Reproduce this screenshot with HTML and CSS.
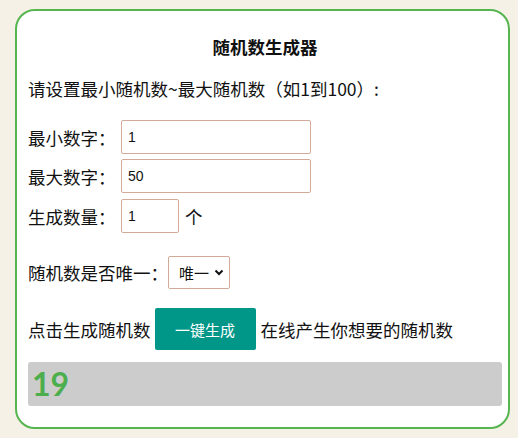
FILE: index.html
```html
<!DOCTYPE html>
<html lang="zh-CN">
<head>
<meta charset="utf-8">
<title>随机数生成器</title>
<link rel="stylesheet" href="styles.css">
</head>
<body>
<div class="card">
  <h3 class="title">随机数生成器</h3>
  <p class="intro">请设置最小随机数~最大随机数（如1到100）:</p>
  <div class="form">
    <div class="row"><label class="lbl">最小数字：</label><input class="inp" type="text" value="1"></div>
    <div class="row"><label class="lbl">最大数字：</label><input class="inp" type="text" value="50"></div>
    <div class="row"><label class="lbl">生成数量：</label><input class="inp short" type="text" value="1"><span class="unit">个</span></div>
  </div>
  <div class="row select-row"><label class="lbl">随机数是否唯一：</label>
    <div class="sel"><span>唯一</span><svg width="10" height="7" viewBox="0 0 10 7"><path d="M1.5 1.5 L5 5 L8.5 1.5" fill="none" stroke="#111" stroke-width="2"/></svg></div>
  </div>
  <div class="row btn-row"><span>点击生成随机数</span><button class="btn">一键生成</button><span>在线产生你想要的随机数</span></div>
  <div class="result">19</div>
</div>
</body>
</html>
```
FILE: styles.css
```css
html, body { margin: 0; padding: 0; }
body {
  background: #f6f1e6;
  font-family: "Noto Sans CJK SC", "Noto Sans", sans-serif;
  font-size: 17.5px;
  color: #111;
  width: 518px;
  height: 438px;
  overflow: hidden;
}
.card {
  box-sizing: border-box;
  margin: 9px 0 0 15px;
  width: 495px;
  height: 420px;
  background: #fff;
  border: 2px solid #55b54f;
  border-radius: 20px;
  padding: 24px 6px 0 11px;
}
.title {
  margin: 0;
  text-align: center;
  font-size: 17.5px;
  font-weight: bold;
  line-height: 24px;
}
.intro {
  margin: 18px 0 0;
  line-height: 24px;
}
.form {
  margin-top: 19px;
  display: flex;
  flex-direction: column;
  gap: 5px;
}
.row {
  display: flex;
  align-items: center;
}
.lbl { width: 93px; flex: none; white-space: nowrap; }
.inp {
  box-sizing: border-box;
  width: 190px;
  height: 34px;
  border: 1px solid #d2aa97;
  border-radius: 2px;
  padding: 0 6px;
  font-family: "Liberation Sans", Arial, sans-serif;
  font-size: 14px;
  color: #111;
  outline: none;
}
.inp.short { width: 58px; }
.unit { margin-left: 6px; }
.form .row:last-child { margin-top: 1px; }
.select-row { margin-top: 23px; }
.select-row .lbl { width: 140px; }
.sel {
  box-sizing: border-box;
  width: 62px;
  height: 33px;
  border: 1px solid #d2aa97;
  border-radius: 2px;
  display: flex;
  align-items: center;
  justify-content: space-between;
  padding: 0 5px 0 10px;
  font-size: 15px;
}
.btn-row { margin-top: 19px; white-space: nowrap; }
.btn {
  box-sizing: border-box;
  flex: none;
  width: 101px;
  height: 42px;
  margin: 0 5px 0 4px;
  border: none;
  border-radius: 2px;
  background: #009688;
  color: #fff;
  font-family: "Noto Sans CJK SC", sans-serif;
  font-size: 15px;
}
.result {
  box-sizing: border-box;
  margin-top: 12px;
  width: 474px;
  height: 44px;
  background: #cccccc;
  border-radius: 3px;
  padding-left: 4px;
  color: #4cae4c;
  font-family: "Lato", sans-serif;
  font-weight: bold;
  font-size: 32px;
  line-height: 44px;
}
```
